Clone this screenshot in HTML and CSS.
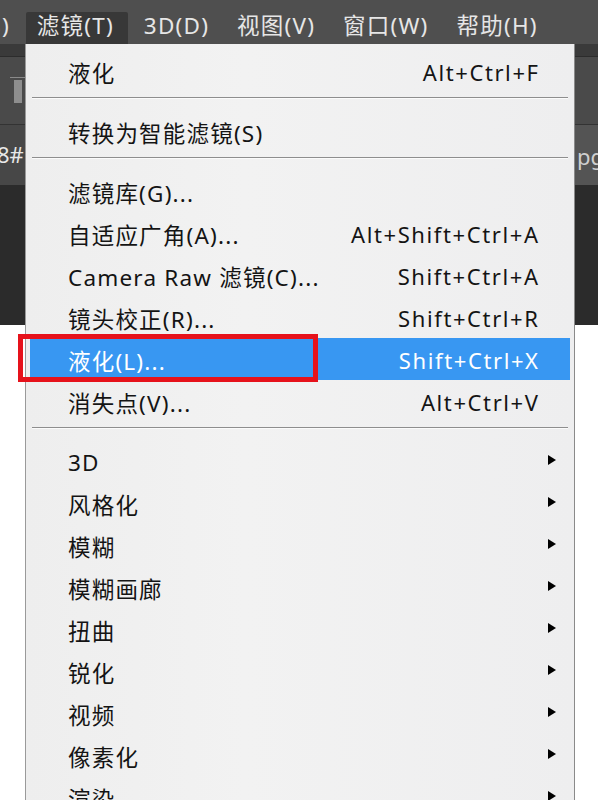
FILE: index.html
```html
<!DOCTYPE html>
<html lang="zh-CN">
<head>
<meta charset="utf-8">
<title>滤镜菜单</title>
<link rel="stylesheet" href="styles.css">
</head>
<body>
<div class="app">
  <div class="menubar">
    <span class="mb-item mb-cut">选择(S)</span>
    <span class="mb-item mb-active">滤镜(T)</span>
    <span class="mb-item">3D(D)</span>
    <span class="mb-item">视图(V)</span>
    <span class="mb-item">窗口(W)</span>
    <span class="mb-item">帮助(H)</span>
  </div>
  <div class="optbar"></div>
  <div class="toolbar">
    <div class="tb-left"><div class="tb-line"></div><div class="tb-thumb"></div></div>
  </div>
  <div class="tabs">
    <div class="tab-left"><span class="tab-text-left">8#</span></div>
    <div class="tab-right"><span class="tab-text-right">pg</span></div>
  </div>
  <div class="dark-area"></div>
  <div class="white-area"></div>

  <div class="menu">
    <div class="row first"><span class="label">液化</span><span class="key">Alt+Ctrl+F</span></div>
    <div class="sep"></div>
    <div class="row"><span class="label">转换为智能滤镜(S)</span></div>
    <div class="sep"></div>
    <div class="row"><span class="label">滤镜库(G)...</span></div>
    <div class="row"><span class="label">自适应广角(A)...</span><span class="key">Alt+Shift+Ctrl+A</span></div>
    <div class="row"><span class="label">Camera Raw 滤镜(C)...</span><span class="key">Shift+Ctrl+A</span></div>
    <div class="row"><span class="label">镜头校正(R)...</span><span class="key">Shift+Ctrl+R</span></div>
    <div class="row selected"><span class="label">液化(L)...</span><span class="key">Shift+Ctrl+X</span><span class="mark"></span></div>
    <div class="row"><span class="label">消失点(V)...</span><span class="key">Alt+Ctrl+V</span></div>
    <div class="sep"></div>
    <div class="row sub"><span class="label">3D</span><span class="arrow"></span></div>
    <div class="row sub"><span class="label">风格化</span><span class="arrow"></span></div>
    <div class="row sub"><span class="label">模糊</span><span class="arrow"></span></div>
    <div class="row sub"><span class="label">模糊画廊</span><span class="arrow"></span></div>
    <div class="row sub"><span class="label">扭曲</span><span class="arrow"></span></div>
    <div class="row sub"><span class="label">锐化</span><span class="arrow"></span></div>
    <div class="row sub"><span class="label">视频</span><span class="arrow"></span></div>
    <div class="row sub"><span class="label">像素化</span><span class="arrow"></span></div>
    <div class="row sub"><span class="label">渲染</span><span class="arrow"></span></div>
  </div>
</div>
</body>
</html>
```

FILE: styles.css
```css
* { box-sizing: border-box; }
html, body { margin: 0; padding: 0; }
body {
  width: 598px;
  height: 800px;
  overflow: hidden;
  font-family: "Noto Sans", "Noto Sans CJK SC", sans-serif;
}
.app {
  position: relative;
  width: 598px;
  height: 800px;
  overflow: hidden;
  background: #fff;
}
.menubar {
  height: 44px;
  background: #4f4f4f;
  display: flex;
  align-items: flex-end;
  white-space: nowrap;
}
.mb-item {
  height: 32px;
  line-height: 27px;
  font-size: 22.5px;
  letter-spacing: 1.2px;
  color: #e6e6e6;
  padding: 0 11px;
  margin-right: 6px;
}
.mb-cut {
  margin-left: -78px;
  margin-right: 5px;
}
.mb-active {
  background: #383838;
  width: 102px;
  padding: 0 0 0 11px;
  border-radius: 2px 2px 0 0;
  margin-right: 5px;
}
.optbar {
  height: 13px;
  background: #3a3a3a;
  border-bottom: 1px solid #2c2c2c;
}
.toolbar {
  height: 68px;
  background: #4a4a4a;
  border-bottom: 1px solid #333;
}
.tb-left {
  width: 25px;
  padding-top: 20px;
  padding-left: 10px;
}
.tb-line {
  height: 1px;
  background: #8a8a8a;
  width: 15px;
}
.tb-thumb {
  width: 8px;
  height: 23px;
  margin: 2px 0 0 4px;
  background: #8e8e8e;
}
.tabs {
  height: 60px;
  display: flex;
  justify-content: space-between;
  background: #474747;
}
.tab-left {
  width: 25px;
  overflow: hidden;
  line-height: 58px;
  color: #e8e8e8;
  font-size: 22px;
  white-space: nowrap;
}
.tab-text-left { margin-left: -3px; }
.tab-right {
  width: 23px;
  background: #545454;
  color: #cfcfcf;
  font-size: 22px;
  line-height: 62px;
  padding-left: 2px;
  white-space: nowrap;
  overflow: hidden;
}
.dark-area {
  height: 140px;
  background: #2b2b2b;
}
.white-area {
  height: 500px;
  background: #fff;
}

.menu {
  position: absolute;
  left: 25px;
  top: 44px;
  width: 550px;
  height: 800px;
  background: linear-gradient(90deg, #eeeeee, #f2f2f2 40%, #eeeeef);
  border-left: 1px solid #9a9a9a;
  border-right: 1px solid #8a8a8a;
  padding-top: 6px;
}
.row {
  position: relative;
  height: 42px;
  margin: 0 4px;
  padding: 2px 32px 0 38px;
  display: flex;
  justify-content: space-between;
  align-items: center;
  color: #141414;
  white-space: nowrap;
}
.label {
  font-size: 22.5px;
  letter-spacing: 1.2px;
}
.key {
  font-size: 22px;
  letter-spacing: 1.6px;
  margin-right: -1.6px;
}
.row.sub { padding-right: 14px; }
.arrow {
  width: 0;
  height: 0;
  border-left: 8px solid #000;
  border-top: 5px solid transparent;
  border-bottom: 5px solid transparent;
  margin-top: -4px;
}
.row.selected {
  background: #3897f2;
  color: #fff;
}
.mark {
  position: absolute;
  left: -12px;
  top: -4px;
  width: 300px;
  height: 48px;
  border: 5px solid #e6121b;
}
.sep {
  height: 18px;
  padding-top: 5px;
  margin: 0 6px;
}
.sep::before {
  content: "";
  display: block;
  height: 1px;
  background: #8e8e8e;
  border-bottom: 1px solid #fbfbfb;
  box-sizing: content-box;
}
```
